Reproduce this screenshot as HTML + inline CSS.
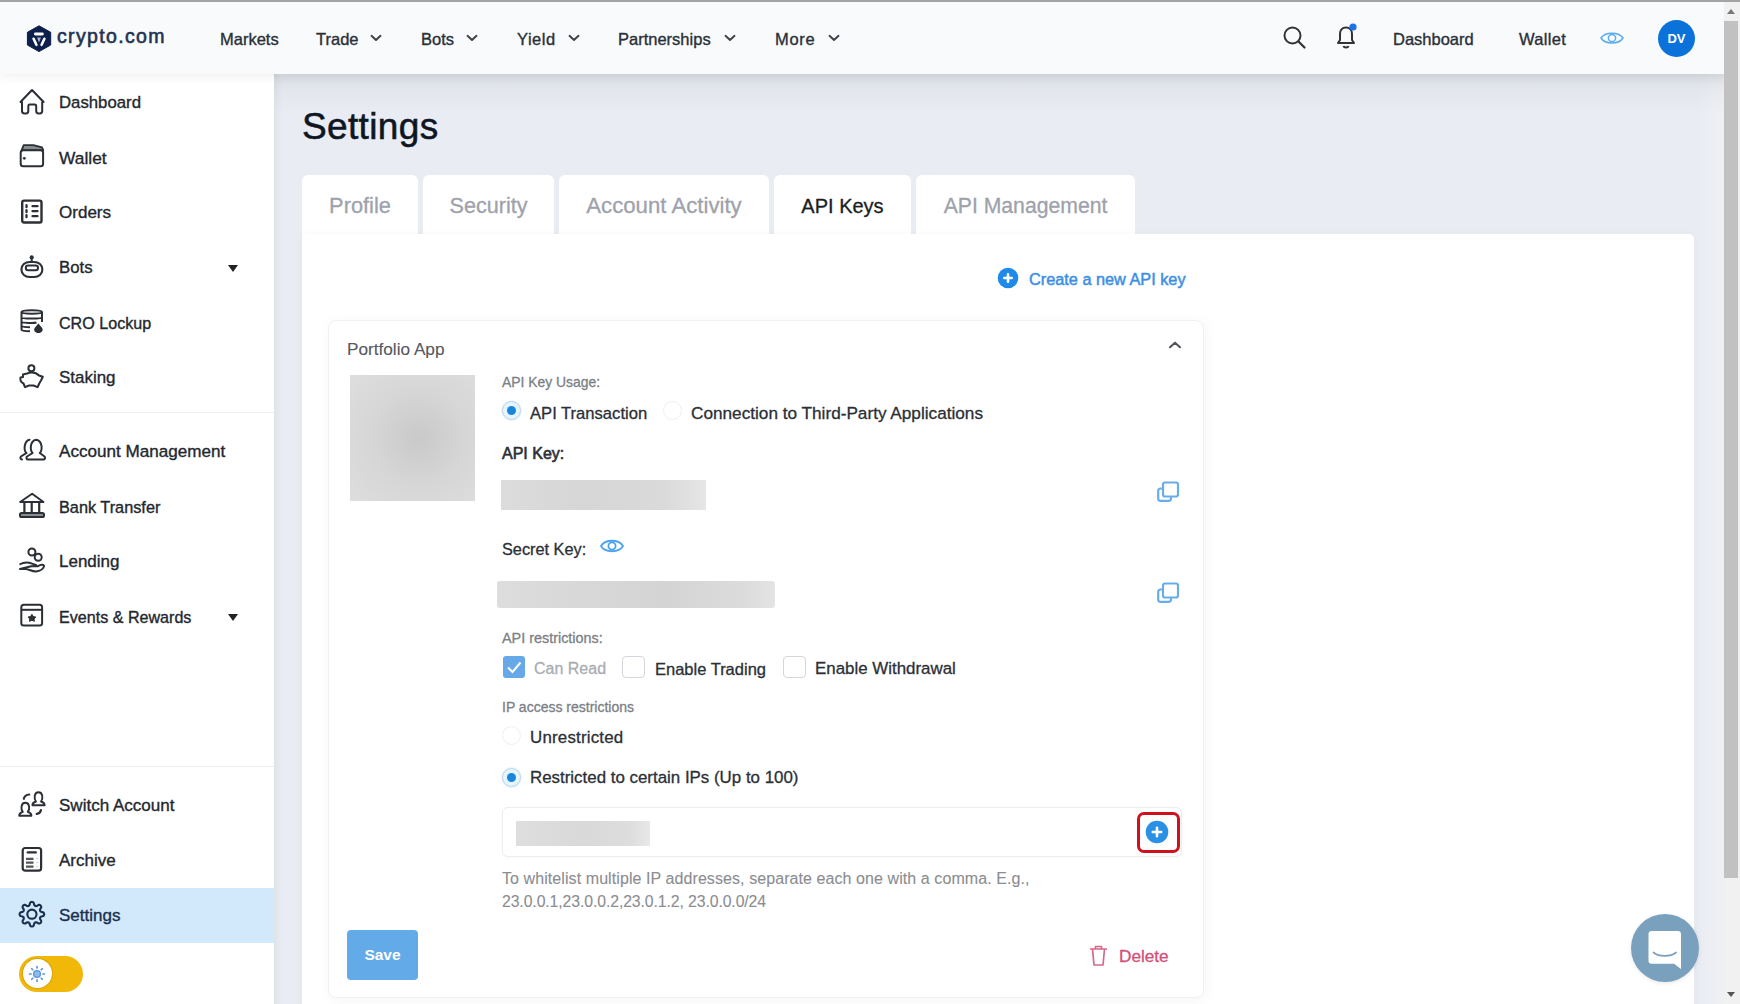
<!DOCTYPE html>
<html><head><meta charset="utf-8">
<style>
*{box-sizing:border-box;margin:0;padding:0}
html,body{width:1740px;height:1004px;overflow:hidden;background:#e9ecf2;font-family:"Liberation Sans",sans-serif;color:#1f2937}
.abs{position:absolute}
#topline{left:0;top:0;width:1740px;height:2px;background:#a2a3a5;z-index:9}
#nav{left:0;top:2px;width:1724px;height:72px;background:#f9fafb;box-shadow:0 2px 10px rgba(0,0,0,0.07);z-index:5}
.nt{position:absolute;top:27px;font-size:16.5px;color:#2a2f38;white-space:nowrap;line-height:20px;-webkit-text-stroke-width:0.35px}
.chev{position:absolute;top:29px;width:8px;height:8px;border-right:1.6px solid #444;border-bottom:1.6px solid #444;transform:rotate(45deg)}
#side{left:0;top:74px;width:274px;height:930px;background:#ffffff;z-index:2}
.si{position:absolute;left:0;width:274px;height:55px}
.si .t{position:absolute;left:59px;top:18px;font-size:16.9px;color:#23272e;line-height:20px;white-space:nowrap;-webkit-text-stroke-width:0.35px}
.si svg{position:absolute;left:18px;top:14px;overflow:visible}
.tri{position:absolute;left:228px;top:25px;width:0;height:0;border-left:5px solid transparent;border-right:5px solid transparent;border-top:7px solid #222}
.sep{position:absolute;left:0;width:274px;height:1px;background:#eceef1}
#scroll{left:1724px;top:2px;width:16px;height:1002px;background:#f1f1f1;z-index:6}
#thumb{left:1724px;top:21px;width:14px;height:857px;background:#c1c1c1;z-index:7}

.tab{position:absolute;top:175px;height:62px;background:#fff;border-radius:6px 6px 0 0;text-align:center;font-size:21px;line-height:62px;white-space:nowrap;-webkit-text-stroke-width:0.3px}
.txt{white-space:nowrap;line-height:20px;-webkit-text-stroke-width:0.3px}
.radio{position:absolute;width:19px;height:19px;border-radius:50%;border:1px solid #eeeff1;background:#fff}
.radio.on{border:1.5px solid #bcd5ec;background:#e4f6fc;box-shadow:0 0 0 1px #eef6fd}
.radio.on::after{content:"";position:absolute;left:3.5px;top:3.5px;width:9px;height:9px;border-radius:50%;background:#1d84dc}
.chk{position:absolute;top:656px;width:23px;height:22px;border:1.5px solid #d3d6da;border-radius:4px;background:#fff}
</style></head>
<body>
<div id="topline" class="abs"></div>
<div id="nav" class="abs">
  <!-- logo -->
  <svg class="abs" style="left:26px;top:21px" width="26" height="30" viewBox="0 0 26 30">
    <path d="M13 2.8 L24.7 9.3 L24.7 22 L13 28.6 L1.4 22 L1.4 9.3 Z" fill="#0c1f4d" stroke="#0c1f4d" stroke-width="1" stroke-linejoin="round"/>
    <rect x="8" y="9.6" width="9.8" height="2.9" rx="1.4" fill="#fff"/>
    <path d="M7.6 15.8 L10.4 21.8 M18.4 15.8 L15.6 21.8" stroke="#fff" stroke-width="2.6" stroke-linecap="round"/>
    <path d="M11 14.6 L15 14.6 L13 19.5 Z" fill="#9fb4d6"/>
  </svg>
  <div class="nt" style="left:57px;top:24px;font-size:19.5px;color:#243250;letter-spacing:1.35px;-webkit-text-stroke:0.6px #243250">crypto.com</div>
  <div class="nt" style="left:220px">Markets</div>
  <div class="nt" style="left:316px">Trade</div><svg class="abs" style="left:370px;top:31.5px" width="12" height="8" viewBox="0 0 12 8"><path d="M1.5 1.8 L6 6 L10.5 1.8" fill="none" stroke="#3d4148" stroke-width="1.9" stroke-linecap="round" stroke-linejoin="round"/></svg>
  <div class="nt" style="left:421px">Bots</div><svg class="abs" style="left:466px;top:31.5px" width="12" height="8" viewBox="0 0 12 8"><path d="M1.5 1.8 L6 6 L10.5 1.8" fill="none" stroke="#3d4148" stroke-width="1.9" stroke-linecap="round" stroke-linejoin="round"/></svg>
  <div class="nt" style="left:517px;letter-spacing:0.5px">Yield</div><svg class="abs" style="left:568px;top:31.5px" width="12" height="8" viewBox="0 0 12 8"><path d="M1.5 1.8 L6 6 L10.5 1.8" fill="none" stroke="#3d4148" stroke-width="1.9" stroke-linecap="round" stroke-linejoin="round"/></svg>
  <div class="nt" style="left:618px">Partnerships</div><svg class="abs" style="left:724px;top:31.5px" width="12" height="8" viewBox="0 0 12 8"><path d="M1.5 1.8 L6 6 L10.5 1.8" fill="none" stroke="#3d4148" stroke-width="1.9" stroke-linecap="round" stroke-linejoin="round"/></svg>
  <div class="nt" style="left:775px;letter-spacing:0.7px">More</div><svg class="abs" style="left:828px;top:31.5px" width="12" height="8" viewBox="0 0 12 8"><path d="M1.5 1.8 L6 6 L10.5 1.8" fill="none" stroke="#3d4148" stroke-width="1.9" stroke-linecap="round" stroke-linejoin="round"/></svg>
  <!-- search -->
  <svg class="abs" style="left:1282px;top:23px" width="26" height="26" viewBox="0 0 26 26"><circle cx="10.5" cy="10.5" r="8" fill="none" stroke="#333" stroke-width="2"/><path d="M16.5 16.5 L22.5 22.5" stroke="#333" stroke-width="2.2" stroke-linecap="round"/></svg>
  <!-- bell -->
  <svg class="abs" style="left:1333px;top:20px" width="28" height="30" viewBox="0 0 28 30"><path d="M5 21 L7 18 L7 12 C7 8 9.5 5.5 13 5.5 C16.5 5.5 19 8 19 12 L19 18 L21 21 Z" fill="none" stroke="#333" stroke-width="2" stroke-linejoin="round"/><path d="M10.5 24 C11 26 15 26 15.5 24" fill="none" stroke="#333" stroke-width="2"/><circle cx="20" cy="5" r="3.6" fill="#1a73e8"/></svg>
  <div class="nt" style="left:1393px">Dashboard</div>
  <div class="nt" style="left:1519px;letter-spacing:0.3px">Wallet</div>
  <!-- eye -->
  <svg class="abs" style="left:1599px;top:26px" width="26" height="20" viewBox="0 0 26 20"><path d="M2 10 C6 3.5 20 3.5 24 10 C20 16.5 6 16.5 2 10 Z" fill="none" stroke="#58acf2" stroke-width="1.5"/><circle cx="13" cy="10" r="3.6" fill="none" stroke="#58acf2" stroke-width="1.5"/></svg>
  <div class="abs" style="left:1658px;top:18px;width:37px;height:37px;border-radius:50%;background:#0a72d9;color:#fff;font-size:13px;font-weight:700;text-align:center;line-height:37px">DV</div>
</div>
<div id="scroll" class="abs"></div>
<div id="thumb" class="abs"></div>
<div class="abs" style="left:1727px;top:9px;width:0;height:0;border-left:4px solid transparent;border-right:4px solid transparent;border-bottom:5px solid #777;z-index:7"></div>
<div class="abs" style="left:1727px;top:992px;width:0;height:0;border-left:4px solid transparent;border-right:4px solid transparent;border-top:5px solid #555;z-index:7"></div>

<div id="side" class="abs">
  <div class="si" style="top:1px"><svg width="28" height="28" viewBox="0 0 28 28"><path d="M14 1 L2.5 13 L4 13 L4 22 Q4 24.4 6.5 24.4 L8 24.4 Q10.3 24.4 10.3 22 L10.3 17 Q10.3 15.6 11.8 15.6 L16.7 15.6 Q18.2 15.6 18.2 17 L18.2 22 Q18.2 24.4 20.6 24.4 L21.8 24.4 Q24.2 24.4 24.2 22 L24.2 13 L25.6 13 Z" fill="none" stroke="#2b2f36" stroke-width="2" stroke-linejoin="round"/></svg><div class="t" style="font-size:16.75px">Dashboard</div></div>
  <div class="si" style="top:56px"><svg width="28" height="28" viewBox="0 0 28 28"><path d="M3.6 6.3 L5.7 1.2 L15.4 1.2 L24 3.3 L25.3 6.3 Z" fill="#8a8d92" stroke="#2b2f36" stroke-width="1.8" stroke-linejoin="round"/><rect x="2.7" y="6.3" width="22.4" height="16" rx="2.5" fill="#fff" stroke="#2b2f36" stroke-width="2"/><circle cx="6.3" cy="14.3" r="1.4" fill="#2b2f36"/></svg><div class="t" style="font-size:17.4px">Wallet</div></div>
  <div class="si" style="top:111px"><svg width="28" height="28" viewBox="0 0 28 28"><rect x="4.2" y="1.6" width="19.3" height="21.9" rx="1.8" fill="none" stroke="#2b2f36" stroke-width="2.4"/><path d="M8.5 6.2 L8.5 8.2 M8.5 11.2 L8.5 13.2 M8.5 16.2 L8.5 18.2 M14.5 7.2 L19.5 7.2 M14.5 12.2 L19.5 12.2 M14.5 17.2 L19.5 17.2" stroke="#2b2f36" stroke-width="2.3" stroke-linecap="round"/></svg><div class="t" style="font-size:17.05px">Orders</div></div>
  <div class="si" style="top:166px"><svg width="28" height="28" viewBox="0 0 28 28"><circle cx="13.7" cy="3.4" r="2.1" fill="#2b2f36"/><path d="M13.7 4 L13.7 7.5" stroke="#2b2f36" stroke-width="2"/><rect x="3.5" y="8" width="20.8" height="15" rx="8" ry="7" fill="none" stroke="#2b2f36" stroke-width="2.1"/><rect x="7.8" y="11.6" width="12.2" height="4.6" rx="2.3" fill="none" stroke="#2b2f36" stroke-width="2"/></svg><div class="t" style="font-size:16.75px">Bots</div><div class="tri"></div></div>
  <div class="si" style="top:221px"><svg width="28" height="28" viewBox="0 0 28 28"><path d="M3.5 3 C3.5 0.8 24 0.8 24 3 L24 13 M3.5 3 L3.5 20.5 C3.5 22 7 22.2 12 22.2 M3.5 3 C3.5 5.2 24 5.2 24 3 M3.5 8.3 C3.5 10 24 10 24 8.3 M3.5 12.6 C3.5 14.2 16 14.3 18.5 13.5 M3.5 16.5 C3.5 17.8 8 18.2 12 18.2" fill="none" stroke="#2b2f36" stroke-width="2"/><path d="M20.4 14.5 L24.2 19 C25.5 21.5 23.8 24 20.4 24 C17 24 15.3 21.5 16.6 19 Z" fill="#2b2f36"/></svg><div class="t" style="font-size:16.1px">CRO Lockup</div></div>
  <div class="si" style="top:276px"><svg width="28" height="28" viewBox="0 0 28 28"><circle cx="13.4" cy="4.2" r="3" fill="none" stroke="#2b2f36" stroke-width="2"/><path d="M5 10.5 L9 9.5 C13 8 18 8.5 21 11.5 L24.8 12.8 L23 16.5 L21.5 19 L19.5 23.2 L15.5 21.5 L11 21.5 L7 23.2 L5.5 19.5 C2.5 18 2 15.5 2.5 13.5 L5 13 Z" fill="none" stroke="#2b2f36" stroke-width="2" stroke-linejoin="round"/></svg><div class="t" style="font-size:16.95px">Staking</div></div>
  <div class="sep" style="top:338px"></div>
  <div class="si" style="top:350px"><svg width="28" height="28" viewBox="0 0 28 28"><path d="M14.6 15 C12 12.5 11.5 3 18.2 1.8 C24.9 3 24.4 12.5 21.8 15 L26.5 18.5 C27.5 19.5 27 21.5 25.5 21.5 L10 21.5 C8.5 21.5 8 19.5 9 18.5 Z" fill="none" stroke="#2b2f36" stroke-width="2" stroke-linejoin="round"/><path d="M11.5 1.8 C6 3 5.5 12 8.3 15 L3 18.5 C1.8 19.5 2.5 21.5 4 21.5" fill="none" stroke="#2b2f36" stroke-width="2" stroke-linecap="round"/></svg><div class="t" style="font-size:17.1px">Account Management</div></div>
  <div class="si" style="top:405px"><svg width="28" height="28" viewBox="0 0 28 28"><path d="M2.2 9 L14.1 0.8 L25.5 9 Z" fill="none" stroke="#2b2f36" stroke-width="2" stroke-linejoin="round"/><path d="M6.4 9.5 L6.4 19.5 M13.7 9.5 L13.7 19.5 M21.2 9.5 L21.2 19.5" stroke="#2b2f36" stroke-width="2.2"/><rect x="2" y="20" width="24" height="4" rx="1.6" fill="#8a8d92" stroke="#2b2f36" stroke-width="2"/></svg><div class="t" style="font-size:16.3px">Bank Transfer</div></div>
  <div class="si" style="top:460px"><svg width="28" height="28" viewBox="0 0 28 28"><circle cx="13.9" cy="4" r="3.5" fill="none" stroke="#2b2f36" stroke-width="2"/><circle cx="20.2" cy="9.3" r="3.5" fill="none" stroke="#2b2f36" stroke-width="2"/><path d="M1.5 16.5 C5 14.5 10 14 14 15.6 L19 17.5 M13.2 18.2 L20 18.2 C23 16 26 16.5 26 18.5 C25 21 22 23 18 23.5 C14 23.5 11 21.5 8 21 L2 21 Z" fill="none" stroke="#2b2f36" stroke-width="2" stroke-linejoin="round"/></svg><div class="t" style="font-size:17.0px">Lending</div></div>
  <div class="si" style="top:515px"><svg width="28" height="28" viewBox="0 0 28 28"><rect x="3.3" y="1.8" width="20.8" height="20.8" rx="2.5" fill="none" stroke="#2b2f36" stroke-width="2"/><path d="M3.5 6.8 L24 6.8" stroke="#2b2f36" stroke-width="2"/><path d="M13.9 11.3 L15.2 13.6 L17.8 14 L16 16 L16.4 18.3 L13.9 17.3 L11.4 18.3 L11.8 16 L10 14 L12.6 13.6 Z" fill="#2b2f36" stroke="#2b2f36" stroke-width="1" stroke-linejoin="round"/></svg><div class="t" style="font-size:16.1px">Events &amp; Rewards</div><div class="tri"></div></div>
  <div class="sep" style="top:692px"></div>
  <div class="si" style="top:704px"><svg width="28" height="28" viewBox="0 0 28 28"><path d="M1.2 23.7 C1.2 21.099999999999998 3.4000000000000004 20.3 4.8 19.9 C2.5999999999999996 17.2 2.8 10.8 7.3 10.8 C11.8 10.8 12.0 17.2 9.8 19.9 C11.2 20.3 13.4 21.099999999999998 13.4 23.7 Z" fill="none" stroke="#2b2f36" stroke-width="1.9" stroke-linejoin="round"/><path d="M14.4 13.3 C14.4 10.700000000000001 16.6 9.9 18.0 9.5 C15.8 6.800000000000001 16.0 0.3 20.5 0.3 C25.0 0.3 25.200000000000003 6.800000000000001 23.0 9.5 C24.400000000000002 9.9 26.6 10.700000000000001 26.6 13.3 Z" fill="none" stroke="#2b2f36" stroke-width="1.9" stroke-linejoin="round"/><path d="M5.8 6.8 C6.5 4 8.5 2.7 11.2 2.5 M18.7 21.9 C21.5 21.5 22.7 20 23 18" fill="none" stroke="#2b2f36" stroke-width="2.2" stroke-linecap="round"/></svg><div class="t" style="font-size:17.05px">Switch Account</div></div>
  <div class="si" style="top:759px"><svg width="28" height="28" viewBox="0 0 28 28"><rect x="4.7" y="1" width="18.4" height="22.7" rx="2.5" fill="none" stroke="#2b2f36" stroke-width="2.2"/><path d="M9.8 5.4 L17.7 5.4" stroke="#2b2f36" stroke-width="2.4" stroke-linecap="round"/><path d="M8 11.8 L15.5 11.8 M8 15.6 L15.5 15.6 M8 19.6 L15.5 19.6 M19.1 11.8 L19.1 12 M19.1 15.6 L19.1 15.8 M19.1 19.6 L19.1 19.8" stroke="#555" stroke-width="2.2"/></svg><div class="t" style="font-size:17.05px">Archive</div></div>
  <div class="si" style="top:814px;background:#d2e9fb"><svg width="28" height="28" viewBox="0 0 28 28"><path d="M26.20 12.20 L26.14 12.68 L25.98 13.15 L25.69 13.60 L25.25 14.00 L24.30 14.27 L23.34 14.47 L22.88 14.73 L22.54 15.01 L22.29 15.30 L22.12 15.61 L22.02 15.95 L22.00 16.33 L22.04 16.76 L22.18 17.27 L22.71 18.09 L23.20 18.95 L23.22 19.55 L23.11 20.07 L22.90 20.52 L22.60 20.90 L22.22 21.20 L21.77 21.41 L21.25 21.52 L20.65 21.50 L19.79 21.01 L18.97 20.48 L18.46 20.34 L18.03 20.30 L17.65 20.32 L17.31 20.42 L17.00 20.59 L16.71 20.84 L16.43 21.18 L16.17 21.64 L15.97 22.60 L15.70 23.55 L15.30 23.99 L14.85 24.28 L14.38 24.44 L13.90 24.50 L13.42 24.44 L12.95 24.28 L12.50 23.99 L12.10 23.55 L11.83 22.60 L11.63 21.64 L11.37 21.18 L11.09 20.84 L10.80 20.59 L10.49 20.42 L10.15 20.32 L9.77 20.30 L9.34 20.34 L8.83 20.48 L8.01 21.01 L7.15 21.50 L6.55 21.52 L6.03 21.41 L5.58 21.20 L5.20 20.90 L4.90 20.52 L4.69 20.07 L4.58 19.55 L4.60 18.95 L5.09 18.09 L5.62 17.27 L5.76 16.76 L5.80 16.33 L5.78 15.95 L5.68 15.61 L5.51 15.30 L5.26 15.01 L4.92 14.73 L4.46 14.47 L3.50 14.27 L2.55 14.00 L2.11 13.60 L1.82 13.15 L1.66 12.68 L1.60 12.20 L1.66 11.72 L1.82 11.25 L2.11 10.80 L2.55 10.40 L3.50 10.13 L4.46 9.93 L4.92 9.67 L5.26 9.39 L5.51 9.10 L5.68 8.79 L5.78 8.45 L5.80 8.07 L5.76 7.64 L5.62 7.13 L5.09 6.31 L4.60 5.45 L4.58 4.85 L4.69 4.33 L4.90 3.88 L5.20 3.50 L5.58 3.20 L6.03 2.99 L6.55 2.88 L7.15 2.90 L8.01 3.39 L8.83 3.92 L9.34 4.06 L9.77 4.10 L10.15 4.08 L10.49 3.98 L10.80 3.81 L11.09 3.56 L11.37 3.22 L11.63 2.76 L11.83 1.80 L12.10 0.85 L12.50 0.41 L12.95 0.12 L13.42 -0.04 L13.90 -0.10 L14.38 -0.04 L14.85 0.12 L15.30 0.41 L15.70 0.85 L15.97 1.80 L16.17 2.76 L16.43 3.22 L16.71 3.56 L17.00 3.81 L17.31 3.98 L17.65 4.08 L18.03 4.10 L18.46 4.06 L18.97 3.92 L19.79 3.39 L20.65 2.90 L21.25 2.88 L21.77 2.99 L22.22 3.20 L22.60 3.50 L22.90 3.88 L23.11 4.33 L23.22 4.85 L23.20 5.45 L22.71 6.31 L22.18 7.13 L22.04 7.64 L22.00 8.07 L22.02 8.45 L22.12 8.79 L22.29 9.10 L22.54 9.39 L22.88 9.67 L23.34 9.93 L24.30 10.13 L25.25 10.40 L25.69 10.80 L25.98 11.25 L26.14 11.72 Z" fill="none" stroke="#1a2f4e" stroke-width="2.1" stroke-linejoin="round"/><circle cx="13.9" cy="12.2" r="4.6" fill="none" stroke="#1a2f4e" stroke-width="2.1"/></svg><div class="t" style="font-size:17.0px;color:#1a2f4e">Settings</div></div>
  <div class="abs" style="left:19px;top:882px;width:64px;height:36px;border-radius:18px;background:#f1b80a"></div>
  <div class="abs" style="left:22.5px;top:885px;width:29px;height:29px;border-radius:50%;background:#fff;box-shadow:0 0 0 1.2px #d9a70c"></div>
  <svg class="abs" style="left:26px;top:888.5px" width="22" height="22" viewBox="0 0 22 22"><circle cx="11" cy="11" r="3.4" fill="#8fbdf0" stroke="#5b95dc" stroke-width="1.4"/><path d="M11 3.5v1.6 M11 16.9v1.6 M3.5 11h1.6 M16.9 11h1.6 M5.7 5.7l1.1 1.1 M15.2 15.2l1.1 1.1 M5.7 16.3l1.1-1.1 M15.2 6.8l1.1-1.1" stroke="#5b8fd6" stroke-width="1.6" stroke-linecap="round"/></svg>
</div>

<div id="main">
  <div class="abs" style="left:1698px;top:74px;width:26px;height:930px;background:linear-gradient(90deg,rgba(240,241,244,0) 0%,rgba(238,240,243,0.8) 60%,#eef0f2 100%)"></div>
  <div class="abs" style="left:274px;top:74px;width:1450px;height:40px;background:linear-gradient(rgba(40,50,70,0.085),rgba(40,50,70,0.03) 40%,rgba(40,50,70,0))"></div>
  <div class="abs" style="left:274px;top:74px;width:8px;height:930px;background:linear-gradient(90deg,rgba(0,0,0,0.04),rgba(0,0,0,0))"></div>
  <div class="abs" style="left:302px;top:105px;font-size:37px;font-weight:400;color:#0f1623;line-height:44px;-webkit-text-stroke:0.55px #0f1623;letter-spacing:0.35px">Settings</div>
  <!-- tabs -->
  <div class="tab" style="left:302px;width:116px"><span style="color:#9ea2ab;font-size:21.8px">Profile</span></div>
  <div class="tab" style="left:423px;width:131px"><span style="color:#9ea2ab;font-size:21.6px">Security</span></div>
  <div class="tab" style="left:559px;width:210px"><span style="color:#9ea2ab;font-size:22.2px">Account Activity</span></div>
  <div class="tab" style="left:774px;width:137px"><span style="color:#1a1d23;font-size:20px">API Keys</span></div>
  <div class="tab" style="left:916px;width:219px"><span style="color:#9ea2ab;font-size:21.2px">API Management</span></div>
  <div class="abs" style="left:302px;top:234px;width:1392px;height:800px;background:#fff;border-radius:0 5px 0 0;box-shadow:0 0 10px rgba(0,0,0,0.03)"></div>
  <!-- create -->
  <svg class="abs" style="left:997px;top:267px" width="22" height="22" viewBox="0 0 22 22"><circle cx="11" cy="11" r="10.3" fill="#1f8ae8"/><path d="M11 7.3v7.4 M7.3 11h7.4" stroke="#fff" stroke-width="2.6" stroke-linecap="round"/></svg>
  <div class="abs txt" style="left:1029px;top:269px;font-size:16.3px;color:#3d8fe2;-webkit-text-stroke-width:0.5px">Create a new API key</div>
  <!-- inner card -->
  <div class="abs" style="left:328px;top:320px;width:876px;height:678px;background:#fff;border-radius:8px;border:1px solid #f0f1f3;box-shadow:2px 2px 14px rgba(0,0,0,0.045)"></div>
  <div class="abs txt" style="left:347px;top:339px;font-size:17.2px;color:#55585e;-webkit-text-stroke-width:0.1px">Portfolio App</div>
  <svg class="abs" style="left:1165px;top:338px" width="20" height="14" viewBox="0 0 20 14"><path d="M5 9.2 L10 4.7 L15 9.2" fill="none" stroke="#505358" stroke-width="2.1" stroke-linecap="round" stroke-linejoin="round"/></svg>
  <div class="abs" style="left:350px;top:375px;width:125px;height:126px;background:radial-gradient(circle at 55% 50%,#c9c9c9 0%,#d6d6d6 50%,#dedede 100%)"></div>
  <div class="abs txt" style="left:502px;top:372px;font-size:13.9px;color:#7b7f86">API Key Usage:</div>
  <div class="radio on" style="left:502px;top:401px"></div>
  <div class="abs txt" style="left:530px;top:404px;font-size:16.6px;color:#2b2f36">API Transaction</div>
  <div class="radio" style="left:663px;top:401px"></div>
  <div class="abs txt" style="left:691px;top:402.5px;font-size:17.2px;color:#2b2f36">Connection to Third-Party Applications</div>
  <div class="abs txt" style="left:502px;top:444px;font-size:16px;color:#2b2f36;-webkit-text-stroke-width:0.6px">API Key:</div>
  <div class="abs" style="left:501px;top:480px;width:205px;height:30px;background:linear-gradient(90deg,#dcdcdc,#d6d6d6 40%,#dadada 80%,#e6e6e6)"></div>
  <svg class="abs copy" style="left:1156px;top:479px" width="24" height="24" viewBox="0 0 24 24"><rect x="7" y="3.5" width="15" height="14" rx="2" fill="none" stroke="#69ade8" stroke-width="2.2"/><path d="M6 9.5 L4.5 9.5 C3 9.5 2.2 10.5 2.2 12 L2.2 19.5 C2.2 21 3 21.8 4.5 21.8 L12.5 21.8 C14 21.8 15 21 15 19.5 L15 18" fill="none" stroke="#69ade8" stroke-width="2.2"/></svg>
  <div class="abs txt" style="left:502px;top:539px;font-size:16.3px;color:#2b2f36">Secret Key:</div>
  <svg class="abs" style="left:599px;top:536px" width="26" height="20" viewBox="0 0 26 20"><path d="M2 10 C6 3 20 3 24 10 C20 17 6 17 2 10 Z" fill="none" stroke="#4aa3f0" stroke-width="1.8"/><circle cx="13" cy="10" r="3.6" fill="none" stroke="#4aa3f0" stroke-width="1.8"/></svg>
  <div class="abs" style="left:497px;top:581px;width:278px;height:27px;border-radius:3px;background:linear-gradient(90deg,#dddddd,#d8d8d8 30%,#d4d4d4 60%,#dcdcdc 90%,#e4e4e4)"></div>
  <svg class="abs copy" style="left:1156px;top:580px" width="24" height="24" viewBox="0 0 24 24"><rect x="7" y="3.5" width="15" height="14" rx="2" fill="none" stroke="#69ade8" stroke-width="2.2"/><path d="M6 9.5 L4.5 9.5 C3 9.5 2.2 10.5 2.2 12 L2.2 19.5 C2.2 21 3 21.8 4.5 21.8 L12.5 21.8 C14 21.8 15 21 15 19.5 L15 18" fill="none" stroke="#69ade8" stroke-width="2.2"/></svg>
  <div class="abs txt" style="left:502px;top:628px;font-size:14.4px;color:#7b7f86">API restrictions:</div>
  <div class="abs" style="left:503px;top:656px;width:22px;height:22px;border-radius:3px;background:#67a9e8"></div>
  <svg class="abs" style="left:503px;top:656px" width="22" height="22" viewBox="0 0 22 22"><path d="M5 11.5 L9.5 16 L17.5 6.5" fill="none" stroke="#fff" stroke-width="2"/></svg>
  <div class="abs txt" style="left:534px;top:659px;font-size:16px;color:#a9adb3">Can Read</div>
  <div class="chk" style="left:622px"></div>
  <div class="abs txt" style="left:655px;top:658.5px;font-size:16.5px;color:#2b2f36">Enable Trading</div>
  <div class="chk" style="left:783px"></div>
  <div class="abs txt" style="left:815px;top:659px;font-size:16.9px;color:#2b2f36">Enable Withdrawal</div>
  <div class="abs txt" style="left:502px;top:697px;font-size:14px;color:#7b7f86">IP access restrictions</div>
  <div class="radio" style="left:502px;top:726px"></div>
  <div class="abs txt" style="left:530px;top:728px;font-size:16.9px;color:#2b2f36;letter-spacing:0.2px">Unrestricted</div>
  <div class="radio on" style="left:502px;top:768px"></div>
  <div class="abs txt" style="left:530px;top:768px;font-size:16.9px;color:#2b2f36">Restricted to certain IPs (Up to 100)</div>
  <div class="abs" style="left:502px;top:807px;width:680px;height:50px;border:1px solid #eceef1;border-radius:6px;box-shadow:0 1px 3px rgba(0,0,0,0.03)"></div>
  <div class="abs" style="left:516px;top:821px;width:134px;height:25px;background:linear-gradient(90deg,#dedede,#d9d9d9 50%,#dddddd 85%,#e8e8e8)"></div>
  <div class="abs" style="left:1137px;top:812px;width:43px;height:41px;border:3.5px solid #d0101f;border-radius:7px"></div>
  <svg class="abs" style="left:1145px;top:820px" width="24" height="24" viewBox="0 0 24 24"><circle cx="12" cy="12" r="11.3" fill="#2a90e4"/><path d="M12 7.8v8.4 M7.8 12h8.4" stroke="#fff" stroke-width="2.6" stroke-linecap="round"/></svg>
  <div class="abs txt" style="left:502px;top:867px;font-size:16px;color:#8b8d91;line-height:23px;letter-spacing:0.08px;-webkit-text-stroke-width:0.1px">To whitelist multiple IP addresses, separate each one with a comma. E.g.,<br><span style="letter-spacing:-0.1px;font-size:15.8px">23.0.0.1,23.0.0.2,23.0.1.2, 23.0.0.0/24</span></div>
  <div class="abs" style="left:347px;top:930px;width:71px;height:50px;border-radius:4px;background:#63aae9;color:#fff;font-size:15.5px;font-weight:700;text-align:center;line-height:50px">Save</div>
  <svg class="abs" style="left:1088px;top:944px" width="21" height="23" viewBox="0 0 21 23"><path d="M2 5 L19 5 M7.5 5 L7.5 2.5 L13.5 2.5 L13.5 5 M4.5 5 L6 21 L15 21 L16.5 5" fill="none" stroke="#d8678a" stroke-width="1.7" stroke-linejoin="round"/></svg>
  <div class="abs txt" style="left:1119px;top:946px;font-size:17.2px;color:#d44f78">Delete</div>
  <!-- chat -->
  <div class="abs" style="left:1631px;top:914px;width:68px;height:68px;border-radius:50%;background:#79a0bd;box-shadow:0 1px 4px rgba(0,0,0,0.1)"></div>
  <svg class="abs" style="left:1645px;top:928px" width="40" height="44" viewBox="0 0 40 44"><path d="M6.5 3 L33 3 C34.8 3 36 4.2 36 6 L36 41 L29 35.8 L6.5 35.8 C4.7 35.8 3.5 34.6 3.5 32.8 L3.5 6 C3.5 4.2 4.7 3 6.5 3 Z" fill="#fff"/><path d="M8.5 24.5 C14 29 25.5 29 31 24.5" fill="none" stroke="#7a9fbe" stroke-width="1.7" stroke-linecap="round"/></svg>
</div>
</body></html>
